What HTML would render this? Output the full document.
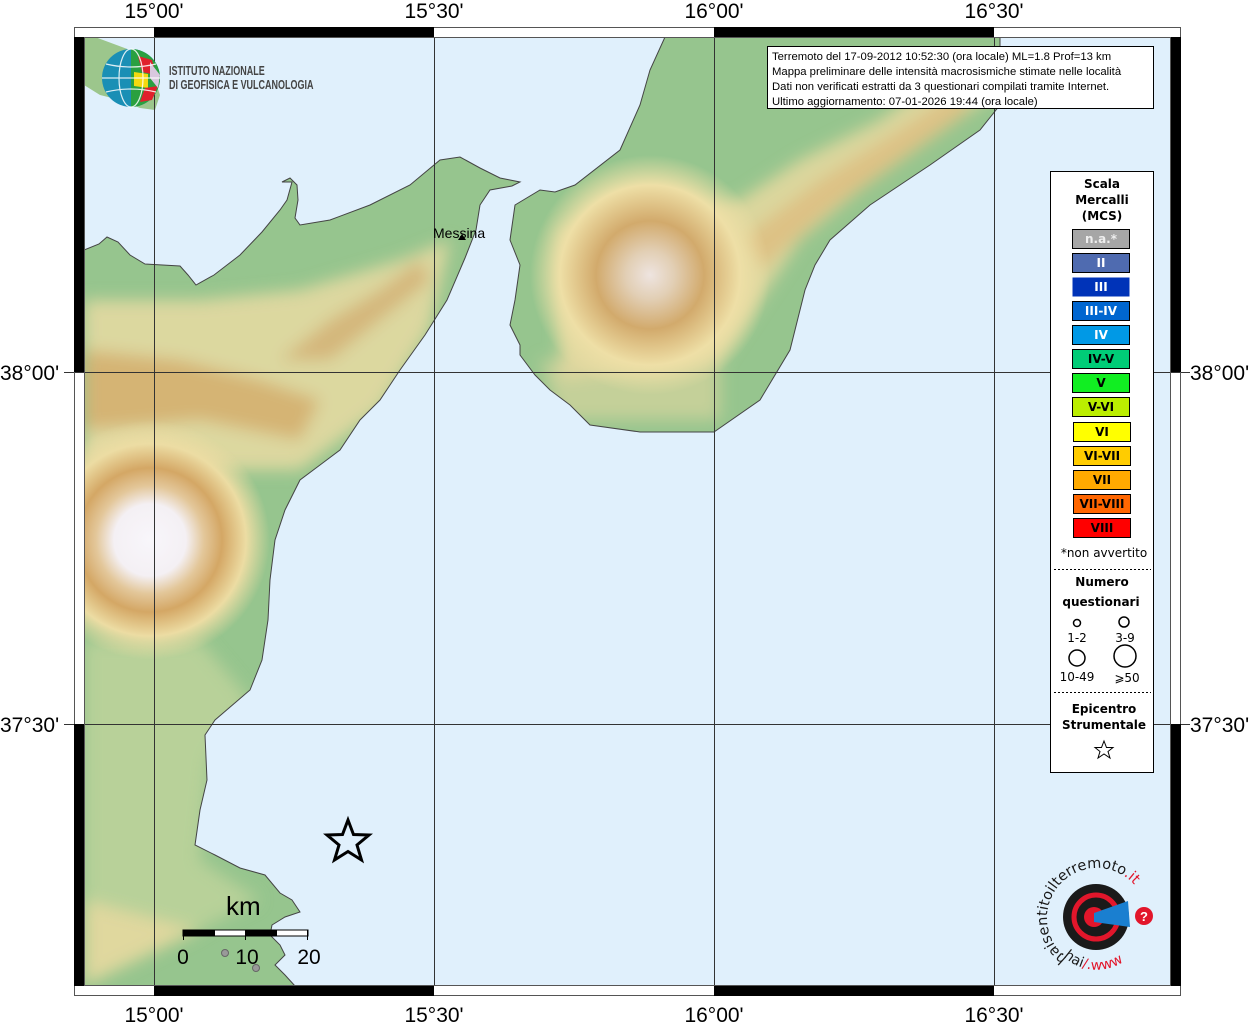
<!DOCTYPE html>
<html><head><meta charset="utf-8"><style>
body{margin:0;background:#fff;width:1254px;height:1024px;overflow:hidden;font-family:"Liberation Sans",sans-serif}
svg{position:absolute;left:0;top:0}
</style></head><body>
<svg width="1254" height="1024" xmlns="http://www.w3.org/2000/svg" font-family="Liberation Sans, DejaVu Sans, sans-serif">
<defs>
<clipPath id="mc"><rect x="84" y="37" width="1087" height="949"/></clipPath>
<clipPath id="sicc"><path d="M84,250 L99,244 L107,237 L118,242 L130,255 L145,264 L180,266 L188,275 L196,285 L214,275 L240,255 L262,232 L280,210 L287,200 L292,182 L282,182 L290,178 L297,185 L298,200 L295,218 L300,225 L330,220 L370,205 L410,185 L440,160 L460,157 L480,168 L500,178 L520,182 L512,186 L490,190 L480,205 L476,230 L465,258 L447,300 L425,335 L400,370 L380,400 L360,420 L340,450 L320,465 L300,480 L285,510 L275,540 L270,580 L268,620 L262,660 L250,690 L215,720 L205,735 L207,780 L200,810 L195,845 L215,855 L240,868 L265,875 L280,893 L292,900 L300,912 L285,917 L272,925 L270,935 L280,945 L285,955 L275,965 L285,975 L295,986 L84,986 Z"/></clipPath>
<clipPath id="calc"><path d="M665,37 L650,70 L640,105 L620,150 L575,185 L555,192 L540,190 L515,205 L510,240 L520,265 L515,300 L510,325 L520,345 L520,355 L535,375 L550,390 L570,405 L590,425 L640,432 L714,432 L760,400 L790,350 L805,290 L815,265 L830,240 L870,205 L930,165 L980,130 L1000,105 L1000,37 Z"/></clipPath>
<filter id="bl" x="-20%" y="-20%" width="140%" height="140%"><feGaussianBlur stdDeviation="8"/></filter>
<radialGradient id="etna" cx="150" cy="540" r="120" gradientUnits="userSpaceOnUse">
<stop offset="0" stop-color="#f8f6fb"/><stop offset="0.3" stop-color="#f4f0f4"/><stop offset="0.45" stop-color="#e3c79a"/><stop offset="0.6" stop-color="#d4a765"/><stop offset="0.8" stop-color="#ecdca3"/><stop offset="1" stop-color="#ecdca3" stop-opacity="0"/></radialGradient>
<radialGradient id="aspro" cx="650" cy="275" r="120" gradientUnits="userSpaceOnUse">
<stop offset="0" stop-color="#eee4e0"/><stop offset="0.2" stop-color="#e2cfb5"/><stop offset="0.45" stop-color="#d2aa6c"/><stop offset="0.75" stop-color="#eedfa6"/><stop offset="1" stop-color="#eedfa6" stop-opacity="0"/></radialGradient>
</defs>
<rect x="84" y="37" width="1087" height="949" fill="#e0f0fc"/>
<g clip-path="url(#mc)">
<path d="M84,37 L95,37 L130,50 L150,65 L160,95 L155,110 L140,108 L120,100 L100,95 L84,85 Z" fill="#9cc68c"/>
<g clip-path="url(#sicc)">
<rect x="84" y="150" width="440" height="836" fill="#96c58e"/>
<g filter="url(#bl)">
<path d="M84,300 L200,300 L300,290 L400,260 L450,240 L430,330 L380,410 L300,470 L84,470 Z" fill="#e9dba2" opacity="0.85"/>
<path d="M84,350 L180,360 L260,380 L320,400 L300,440 L200,420 L84,430 Z" fill="#d3ab6a" opacity="0.8"/>
<path d="M280,360 L330,320 L380,290 L420,260 L430,280 L380,320 L330,360 Z" fill="#d2aa6c" opacity="0.7"/>
<path d="M84,640 L200,640 L250,700 L210,760 L200,860 L260,900 L84,986 Z" fill="#cfd8a0" opacity="0.6"/>
<path d="M84,900 L200,930 L84,986 Z" fill="#ead9a0" opacity="0.8"/>
</g>
<circle cx="150" cy="540" r="125" fill="url(#etna)"/>
</g>
<path d="M84,250 L99,244 L107,237 L118,242 L130,255 L145,264 L180,266 L188,275 L196,285 L214,275 L240,255 L262,232 L280,210 L287,200 L292,182 L282,182 L290,178 L297,185 L298,200 L295,218 L300,225 L330,220 L370,205 L410,185 L440,160 L460,157 L480,168 L500,178 L520,182 L512,186 L490,190 L480,205 L476,230 L465,258 L447,300 L425,335 L400,370 L380,400 L360,420 L340,450 L320,465 L300,480 L285,510 L275,540 L270,580 L268,620 L262,660 L250,690 L215,720 L205,735 L207,780 L200,810 L195,845 L215,855 L240,868 L265,875 L280,893 L292,900 L300,912 L285,917 L272,925 L270,935 L280,945 L285,955 L275,965 L285,975 L295,986" fill="none" stroke="#444" stroke-width="1"/>
<g clip-path="url(#calc)">
<rect x="500" y="37" width="510" height="400" fill="#96c58e"/>
<g filter="url(#bl)">
<path d="M560,230 L740,200 L800,160 L880,120 L960,60 L1000,60 L1000,90 L930,140 L860,190 L800,240 L760,300 L720,360 L560,380 Z" fill="#e8d9a0" opacity="0.85"/>
<path d="M740,240 L820,180 L900,130 L960,90 L970,110 L900,160 L830,210 L760,270 Z" fill="#ddbd80" opacity="0.8"/>
<path d="M540,360 L720,360 L720,420 L560,420 Z" fill="#e3d7a0" opacity="0.6"/>
</g>
<circle cx="650" cy="275" r="125" fill="url(#aspro)"/>
</g>
<path d="M665,37 L650,70 L640,105 L620,150 L575,185 L555,192 L540,190 L515,205 L510,240 L520,265 L515,300 L510,325 L520,345 L520,355 L535,375 L550,390 L570,405 L590,425 L640,432 L714,432 L760,400 L790,350 L805,290 L815,265 L830,240 L870,205 L930,165 L980,130 L1000,105 L1000,37" fill="none" stroke="#444" stroke-width="1"/>
</g>
<g stroke="#333" stroke-width="1">
<line x1="154.5" y1="37" x2="154.5" y2="986"/><line x1="434.5" y1="37" x2="434.5" y2="986"/><line x1="714.5" y1="37" x2="714.5" y2="986"/><line x1="994.5" y1="37" x2="994.5" y2="986"/>
<line x1="84" y1="372.5" x2="1171" y2="372.5"/><line x1="84" y1="724.5" x2="1171" y2="724.5"/>
<line x1="64" y1="372.5" x2="84" y2="372.5"/><line x1="1171" y1="372.5" x2="1190" y2="372.5"/><line x1="64" y1="724.5" x2="84" y2="724.5"/><line x1="1171" y1="724.5" x2="1190" y2="724.5"/>
</g>
<rect x="74.5" y="27.5" width="1106" height="968" fill="none" stroke="#555"/>
<g fill="#000">
<rect x="154" y="27" width="280" height="10"/><rect x="714" y="27" width="280" height="10"/>
<rect x="154" y="986" width="280" height="10"/><rect x="714" y="986" width="280" height="10"/>
<rect x="74" y="37" width="10" height="335"/><rect x="74" y="724" width="10" height="262"/>
<rect x="1171" y="37" width="10" height="335"/><rect x="1171" y="724" width="10" height="262"/>
</g>
<rect x="84.5" y="37.5" width="1086" height="948" fill="none" stroke="#555"/>
<g font-size="21" fill="#000" text-anchor="middle">
<text x="154" y="18">15°00'</text><text x="434" y="18">15°30'</text><text x="714" y="18">16°00'</text><text x="994" y="18">16°30'</text>
<text x="154" y="1022">15°00'</text><text x="434" y="1022">15°30'</text><text x="714" y="1022">16°00'</text><text x="994" y="1022">16°30'</text>
</g>
<g font-size="21" fill="#000">
<text x="0" y="380">38°00'</text><text x="0" y="732">37°30'</text>
<text x="1190" y="380">38°00'</text><text x="1190" y="732">37°30'</text>
</g>
<text x="433" y="238" font-size="14">Messina</text>
<path d="M458,240 L462,234 L466,240 Z" fill="#000"/>
<circle cx="131" cy="78" r="29" fill="#1a8fb5"/>
<path d="M131,49 A29,29 0 0,1 160,78 A29,29 0 0,1 131,107 Z" fill="#2aa040"/>
<path d="M138,56 L152,60 L156,75 L142,72 Z" fill="#e0212c"/>
<path d="M134,72 L148,74 L148,88 L134,86 Z" fill="#f5d90f"/>
<path d="M145,88 L158,86 L152,100 L140,102 Z" fill="#e0212c"/>
<path d="M150,62 L160,75 L158,88 L150,78 Z" fill="#d9c8df"/>
<g stroke="#fff" stroke-width="1.2" fill="none" opacity="0.85">
<ellipse cx="131" cy="78" rx="12" ry="29"/><line x1="102" y1="78" x2="160" y2="78"/><path d="M106,64 Q131,70 156,64"/><path d="M106,92 Q131,86 156,92"/>
</g>
<g transform="translate(169,0) scale(0.72,1)" font-size="12.5" fill="#444" font-weight="bold">
<text x="0" y="75">ISTITUTO NAZIONALE</text>
<text x="0" y="89">DI GEOFISICA E VULCANOLOGIA</text>
</g>
<rect x="767.5" y="46.5" width="386" height="62" fill="#fff" stroke="#000"/>
<g font-size="11.3" fill="#000">
<text x="772" y="60">Terremoto del 17-09-2012 10:52:30 (ora locale) ML=1.8 Prof=13 km</text>
<text x="772" y="75">Mappa preliminare delle intensità macrosismiche stimate nelle località</text>
<text x="772" y="90">Dati non verificati estratti da 3 questionari compilati tramite Internet.</text>
<text x="772" y="105">Ultimo aggiornamento: 07-01-2026 19:44 (ora locale)</text>
</g>
<rect x="1050.5" y="171.5" width="103" height="601" fill="#fff" stroke="#000"/>
<g font-family="DejaVu Sans, sans-serif" font-weight="bold" font-size="12" text-anchor="middle" fill="#000">
<text x="1102" y="188">Scala</text><text x="1102" y="204">Mercalli</text><text x="1102" y="220">(MCS)</text>
</g>
<g font-family="DejaVu Sans, sans-serif" font-weight="bold" font-size="12" text-anchor="middle" stroke="#000">
<rect x="1072.5" y="229.5" width="57" height="19" fill="#a6a6a6"/><text x="1101" y="243" fill="#eee" stroke="none">n.a.*</text>
<rect x="1072.5" y="253.5" width="57" height="19" fill="#4f6bb0"/><text x="1101" y="267" fill="#fff" stroke="none">II</text>
<rect x="1072.5" y="277.5" width="57" height="19" fill="#0033b8" stroke="none"/><text x="1101" y="291" fill="#fff" stroke="none">III</text>
<rect x="1072.5" y="301.5" width="57" height="19" fill="#0066d0"/><text x="1101" y="315" fill="#fff" stroke="none">III-IV</text>
<rect x="1072.5" y="325.5" width="57" height="19" fill="#0099e6"/><text x="1101" y="339" fill="#fff" stroke="none">IV</text>
<rect x="1072.5" y="349.5" width="57" height="19" fill="#00cc77"/><text x="1101" y="363" fill="#000" stroke="none">IV-V</text>
<rect x="1072.5" y="373.5" width="57" height="19" fill="#11ee22"/><text x="1101" y="387" fill="#000" stroke="none">V</text>
<rect x="1072.5" y="397.5" width="57" height="19" fill="#bbee00"/><text x="1101" y="411" fill="#000" stroke="none">V-VI</text>
<rect x="1073.5" y="422.5" width="57" height="19" fill="#ffff00"/><text x="1102" y="436" fill="#000" stroke="none">VI</text>
<rect x="1073.5" y="446.5" width="57" height="19" fill="#ffcc00"/><text x="1102" y="460" fill="#000" stroke="none">VI-VII</text>
<rect x="1073.5" y="470.5" width="57" height="19" fill="#ffaa00"/><text x="1102" y="484" fill="#000" stroke="none">VII</text>
<rect x="1073.5" y="494.5" width="57" height="19" fill="#ff6600"/><text x="1102" y="508" fill="#000" stroke="none">VII-VIII</text>
<rect x="1073.5" y="518.5" width="57" height="19" fill="#ff0000"/><text x="1102" y="532" fill="#000" stroke="none">VIII</text>
</g>
<g font-family="DejaVu Sans, sans-serif" font-size="12" fill="#000" text-anchor="middle">
<text x="1104" y="557">*non avvertito</text>
<line x1="1054" y1="569.5" x2="1151" y2="569.5" stroke="#000" stroke-dasharray="2,2"/>
<text x="1102" y="586" font-weight="bold">Numero</text><text x="1101" y="606" font-weight="bold">questionari</text>
<circle cx="1077" cy="623" r="3.5" fill="none" stroke="#000" stroke-width="1.5"/>
<circle cx="1124" cy="622" r="5" fill="none" stroke="#000" stroke-width="1.5"/>
<text x="1077" y="642">1-2</text><text x="1125" y="642">3-9</text>
<circle cx="1077" cy="658" r="8" fill="none" stroke="#000" stroke-width="1.5"/>
<circle cx="1125" cy="656" r="11" fill="none" stroke="#000" stroke-width="1.5"/>
<text x="1077" y="681">10-49</text><text x="1127" y="682">⩾50</text>
<line x1="1054" y1="692.5" x2="1151" y2="692.5" stroke="#000" stroke-dasharray="2,2"/>
<text x="1104" y="713" font-weight="bold">Epicentro</text><text x="1104" y="729" font-weight="bold">Strumentale</text>
<path d="M1104,741 L1106.5,747.5 L1113,747.5 L1108,751.5 L1110,758 L1104,754 L1098,758 L1100,751.5 L1095,747.5 L1101.5,747.5 Z" fill="none" stroke="#000" stroke-width="1"/>
</g>
<path d="M348,820 L353.5,834.5 L369,835 L357,845 L361.5,860 L348,851.5 L334.5,860 L339,845 L327,835 L342.5,834.5 Z" fill="none" stroke="#000" stroke-width="3"/>
<text x="226" y="915" font-size="26" fill="#000">km</text>
<rect x="183" y="930" width="125" height="6" fill="#fff" stroke="#000" stroke-width="1"/>
<rect x="183" y="930" width="32" height="6" fill="#000"/><rect x="245" y="930" width="32" height="6" fill="#000"/>
<line x1="183.5" y1="930" x2="183.5" y2="940" stroke="#000"/><line x1="245.5" y1="930" x2="245.5" y2="940" stroke="#000"/><line x1="307.5" y1="930" x2="307.5" y2="940" stroke="#000"/>
<g font-size="21" fill="#000" text-anchor="middle"><text x="183" y="964">0</text><text x="247" y="964">10</text><text x="309" y="964">20</text></g>
<circle cx="225" cy="953" r="3.5" fill="#999" stroke="#666"/><circle cx="256" cy="968" r="3.5" fill="#999" stroke="#666"/>
<circle cx="1096" cy="917" r="33" fill="#1a1a1a"/>
<circle cx="1096" cy="917" r="22" fill="none" stroke="#e2162b" stroke-width="5"/>
<circle cx="1094" cy="917" r="10" fill="#e2162b"/>
<path d="M1094,913 L1128,901 L1130,927 L1094,922 Z" fill="#1a7fd0"/>
<circle cx="1144" cy="916" r="9" fill="#e2162b"/>
<text x="1144" y="921" font-size="13" fill="#fff" text-anchor="middle" font-weight="bold">?</text>
<path id="arc" d="M1067,958 A50,50 0 1,1 1145,904" fill="none"/>
<text font-size="14.5" fill="#1a1a1a" font-family="DejaVu Sans, sans-serif"><textPath href="#arc">haisentitoilterremoto<tspan fill="#e2162b">.it</tspan></textPath></text>
<path id="arc2" d="M1058,950 A48,48 0 0,0 1142,938" fill="none"/>
<text font-size="14" fill="#1a1a1a" font-family="DejaVu Sans, sans-serif"><textPath href="#arc2" startOffset="4">.hai<tspan fill="#e2162b">/.www</tspan></textPath></text>
</svg>
</body></html>
